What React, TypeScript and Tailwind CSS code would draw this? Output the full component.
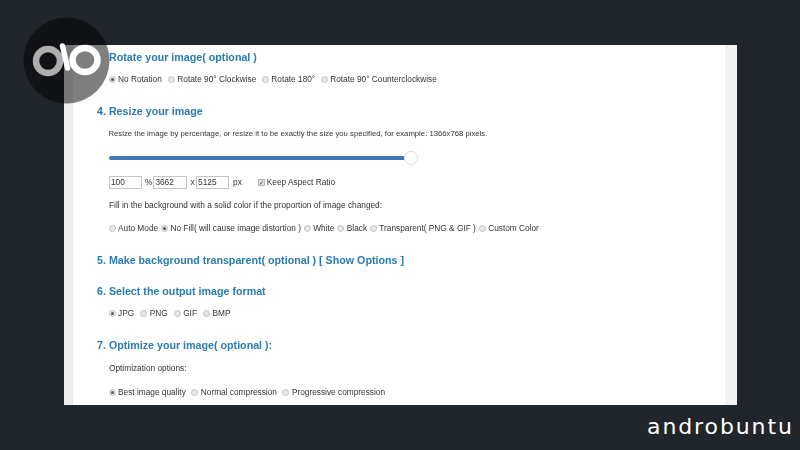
import React from "react";

const Radio = ({ label, on, gap = "mr-[6px]" }: { label: string; on?: boolean; gap?: string }) => (
  <span className={`flex items-center ${gap}`}>
    <span className="w-[7px] h-[7px] rounded-full border border-[#c2c2c2] bg-[#e8e8e8] flex items-center justify-center mr-[2.5px]">
      {on && <span className="w-[3px] h-[3px] rounded-full bg-[#555]" />}
    </span>
    {label}
  </span>
);

const H = ({ children, className = "" }: { children: React.ReactNode; className?: string }) => (
  <div className={`text-[10.7px] leading-[14px] font-bold text-[#2b7bac] ${className}`}>{children}</div>
);

const Box = ({ v, w }: { v: string; w: string }) => (
  <span className={`h-[13px] border border-[#c4c4c4] pl-[1px] leading-[11px] ${w}`}>{v}</span>
);

const Row = ({ children, className = "" }: { children: React.ReactNode; className?: string }) => (
  <div className={`flex items-center h-[11px] pl-[11.5px] ${className}`}>{children}</div>
);

export default function App() {
  return (
    <div className="relative w-[800px] h-[450px] overflow-hidden bg-[#21252c] pt-[45px] pl-[64px] font-['Liberation_Sans',sans-serif]">
      <div className="w-[673px] h-[360px] bg-white border-l-[9px] border-r-[12px] border-l-[#ececec] border-r-[#f3f3f3] pl-[24px] pt-[5px] text-[8.3px] text-[#333] blur-[0.35px]">
        <H className="pl-[12px]">Rotate your image( optional )</H>
        <Row className="mt-[9.5px]">
          <Radio on label="No Rotation" />
          <Radio gap="mr-[5.5px]" label="Rotate 90° Clockwise" />
          <Radio gap="mr-[5.5px]" label="Rotate 180°" />
          <Radio label="Rotate 90° Counterclockwise" />
        </Row>
        <H className="mt-[19.5px]">4. Resize your image</H>
        <Row className="mt-[10px] text-[7.72px]">Resize the image by percentage, or resize it to be exactly the size you specified, for example: 1366x768 pixels.</Row>
        <div className="relative ml-[12px] mt-[12px] w-[309px] h-[14px] flex items-center">
          <div className="w-[296px] h-[4px] rounded-full bg-[#3f74b5]" />
          <div className="absolute right-0 w-[14px] h-[14px] rounded-full bg-white border border-[#dcdcdc]" />
        </div>
        <Row className="mt-[11px] h-[13px] pl-[12px]">
          <Box v="100" w="w-[33px]" />
          <span className="ml-[3px] mr-[1px]">%</span>
          <Box v="3662" w="w-[34px]" />
          <span className="ml-[3px] mr-[1.5px]">x</span>
          <Box v="5125" w="w-[33px]" />
          <span className="ml-[4px] mr-[16px]">px</span>
          <span className="w-[7px] h-[7px] border border-[#b5b5b5] bg-[#ddd] mr-[2px] flex items-center justify-center text-[6px] leading-none">✓</span>
          Keep Aspect Ratio
        </Row>
        <Row className="mt-[10.5px] pl-[12px]">Fill in the background with a solid color if the proportion of image changed:</Row>
        <Row className="mt-[12.5px]">
          <Radio gap="mr-[2.8px]" label="Auto Mode" />
          <Radio gap="mr-[2.8px]" on label="No Fill( will cause image distortion )" />
          <Radio gap="mr-[2.8px]" label="White" />
          <Radio gap="mr-[2.8px]" label="Black" />
          <Radio gap="mr-[2.8px]" label="Transparent( PNG & GIF )" />
          <Radio gap="mr-[2.8px]" label="Custom Color" />
        </Row>
        <H className="mt-[19px]">5. Make background transparent( optional ) [ Show Options ]</H>
        <H className="mt-[17px]">6. Select the output image format</H>
        <Row className="mt-[9.5px]">
          <Radio on label="JPG" />
          <Radio label="PNG" />
          <Radio label="GIF" />
          <Radio label="BMP" />
        </Row>
        <H className="mt-[19.5px]">7. Optimize your image( optional ):</H>
        <Row className="mt-[10.5px] pl-[12px]">Optimization options:</Row>
        <Row className="mt-[13px]">
          <Radio gap="mr-[5.5px]" on label="Best image quality" />
          <Radio gap="mr-[5.5px]" label="Normal compression" />
          <Radio label="Progressive compression" />
        </Row>
      </div>

      <svg className="absolute left-[23px] top-[17px]" width="87" height="87" viewBox="0 0 87 87">
        <circle cx="43.5" cy="43.5" r="43" fill="#000" fillOpacity="0.5" />
        <circle cx="25" cy="44" r="12" fill="none" stroke="#aeaeae" strokeWidth="6.5" />
        <ellipse cx="62" cy="43" rx="12.5" ry="12" fill="none" stroke="#fff" strokeWidth="6.5" />
        <path d="M39.5 29 L44.5 51" stroke="#fff" strokeWidth="5.5" strokeLinecap="round" />
      </svg>

      <div className="absolute left-[647px] top-[412px] text-[22px] leading-[30px] tracking-[1.9px] text-white font-['DejaVu_Sans',sans-serif] font-normal">androbuntu</div>
    </div>
  );
}
